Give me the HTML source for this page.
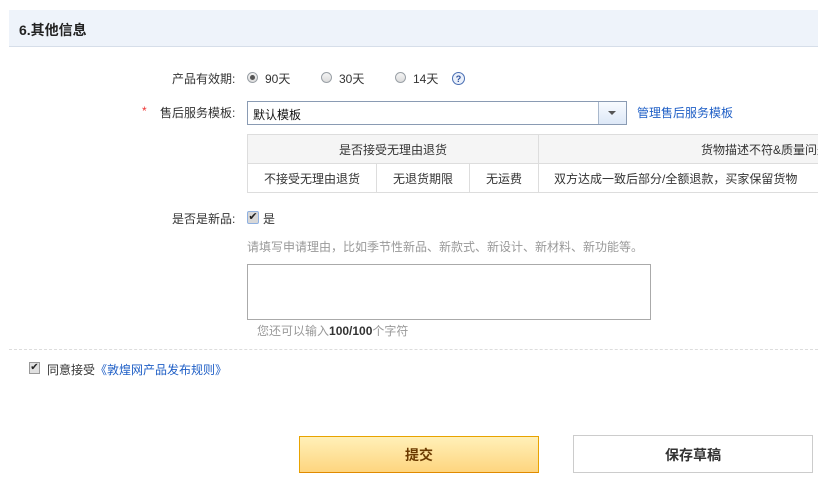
<!DOCTYPE html>
<html><head><meta charset="utf-8"><style>
body{margin:0;width:818px;height:483px;background:#fff;font-family:"Liberation Sans","Noto Sans CJK SC",sans-serif;font-size:12px;color:#333;position:relative;overflow:hidden}
.a{position:absolute;white-space:nowrap}
.hd{left:9px;top:10px;width:809px;height:36px;background:#eef3fa;border-bottom:1px solid #d6dee9}
.hd span{position:absolute;left:10px;top:10px;font-weight:bold;font-size:14px;color:#222}
.radio{width:11px;height:11px;border:1px solid #9aa0a6;border-radius:50%;background:linear-gradient(#f4f4f4,#dcdcdc);box-sizing:border-box}
table{border-collapse:collapse;position:absolute;left:247px;top:134px;font-size:12px;color:#333;table-layout:fixed;width:600px}
td{border:1px solid #ddd;text-align:center;height:28px;padding:0;overflow:hidden;white-space:nowrap}
tr.h td{background:#f5f5f5}
.btn{position:absolute;box-sizing:border-box;text-align:center;font-weight:bold;font-size:14px}
</style></head><body>
<div class="a hd"><span>6.其他信息</span></div>

<div class="a" style="left:172px;top:70px">产品有效期:</div>
<div class="a radio" style="left:247px;top:72px"><div style="width:5px;height:5px;background:#555;border-radius:50%;margin:2px"></div></div>
<div class="a" style="left:265px;top:70px">90天</div>
<div class="a radio" style="left:321px;top:72px"></div>
<div class="a" style="left:339px;top:70px">30天</div>
<div class="a radio" style="left:395px;top:72px"></div>
<div class="a" style="left:413px;top:70px">14天</div>
<div class="a" style="left:452px;top:72px;width:13px;height:13px;border:1px solid #4a6fb3;border-radius:50%;box-sizing:border-box;font-size:9px;font-weight:bold;color:#2c4f9c;text-align:center;line-height:12px;background:#eaf0fa">?</div>

<div class="a" style="left:142px;top:104px;color:#e33">*</div>
<div class="a" style="left:160px;top:104px">售后服务模板:</div>
<div class="a" style="left:247px;top:101px;width:380px;height:24px;border:1px solid #8a9bb3;box-sizing:border-box">
<span style="position:absolute;left:5px;top:4px;color:#111">默认模板</span>
<div style="position:absolute;right:0;top:0;width:27px;height:22px;border-left:1px solid #a9b8cc;background:linear-gradient(#f8fbff,#dde8f7)"><div style="position:absolute;left:9px;top:9px;border-left:4px solid transparent;border-right:4px solid transparent;border-top:4px solid #555"></div></div></div>
<div class="a" style="left:637px;top:104px;color:#1f5fc6">管理售后服务模板</div>

<table><colgroup><col style="width:129px"><col style="width:93px"><col style="width:69px"><col style="width:309px"></colgroup>
<tr class="h"><td colspan="3">是否接受无理由退货</td><td style="text-align:left;padding-left:162px">货物描述不符&amp;质量问题</td></tr>
<tr><td>不接受无理由退货</td><td>无退货期限</td><td>无运费</td><td style="text-align:left;padding-left:15px">双方达成一致后部分/全额退款，买家保留货物</td></tr></table>

<div class="a" style="left:172px;top:210px">是否是新品:</div>
<div class="a" style="left:247px;top:211px;width:12px;height:13px;border:1px solid #8fb0e0;border-radius:2px;background:#d8d8d8;box-sizing:border-box;font-size:11px;line-height:11px;text-align:center;color:#222">✔</div>
<div class="a" style="left:263px;top:210px">是</div>
<div class="a" style="left:247px;top:238px;color:#999">请填写申请理由，比如季节性新品、新款式、新设计、新材料、新功能等。</div>
<div class="a" style="left:247px;top:264px;width:404px;height:56px;border:1px solid #aaa;box-sizing:border-box"></div>
<div class="a" style="left:257px;top:322px;color:#999">您还可以输入<b style="color:#333">100/100</b>个字符</div>
<div class="a" style="left:9px;top:349px;width:809px;border-top:1px dashed #ddd"></div>

<div class="a" style="left:29px;top:362px;width:11px;height:12px;border:1px solid #999;background:#e0e0e0;box-sizing:border-box;font-size:10px;line-height:10px;text-align:center;color:#222">✔</div>
<div class="a" style="left:47px;top:361px">同意接受<span style="color:#1f5fc6">《敦煌网产品发布规则》</span></div>

<div class="btn" style="left:299px;top:436px;width:240px;height:37px;border:1px solid #e8a300;border-bottom-color:#e08a00;background:linear-gradient(#fff0b8,#fed57f);color:#6b3a00;line-height:36px">提交</div>
<div class="btn" style="left:573px;top:435px;width:240px;height:38px;border:1px solid #ccc;background:#fff;color:#333;line-height:38px">保存草稿</div>
</body></html>
